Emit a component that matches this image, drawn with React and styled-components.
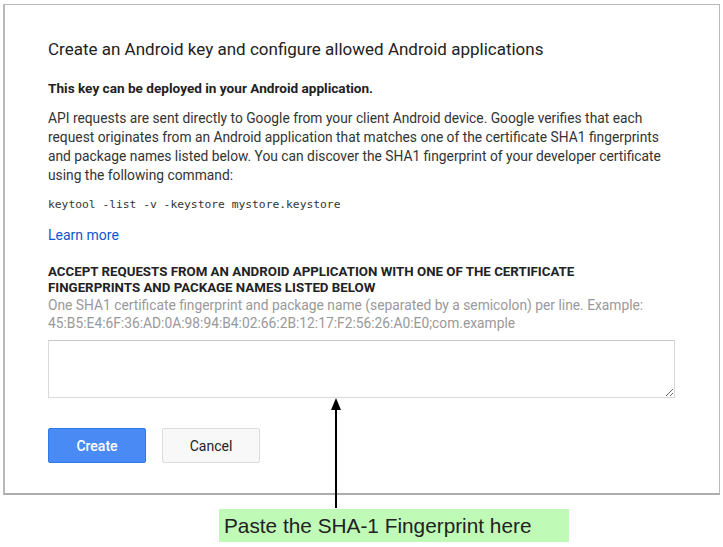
import React from "react";
import styled, { createGlobalStyle } from "styled-components";

const Global = createGlobalStyle`
  html, body { margin: 0; padding: 0; background: #fff; }
  body { font-family: Roboto, "Liberation Sans", Arial, sans-serif; }
`;

const Page = styled.div`
  position: relative;
  width: 723px;
  height: 547px;
  padding: 4px 0 0 3px;
  box-sizing: border-box;
`;

const Dialog = styled.div`
  width: 717px;
  height: 491px;
  box-sizing: border-box;
  border: 1px solid #b9b9b9;
  border-left-width: 2px;
  border-bottom: 2px solid #adadad;
  background: #fff;
  padding: 34px 40px 0 43px;
  display: flex;
  flex-direction: column;
`;

const Title = styled.h1`
  margin: 0;
  font-size: 17px;
  font-weight: 400;
  color: #222;
  line-height: 20px;
`;

const Lead = styled.p`
  margin: 21px 0 0;
  font-size: 13.6px;
  font-weight: 700;
  color: #222;
  line-height: 16px;
`;

const Body = styled.p`
  margin: 13px 0 0;
  font-size: 13.8px;
  color: #333;
  line-height: 19px;
  white-space: nowrap;
`;

const Code = styled.div`
  margin: 12px 0 0;
  font-family: "DejaVu Sans Mono", "Liberation Mono", monospace;
  font-size: 11.3px;
  color: #333;
  line-height: 16px;
`;

const Link = styled.a`
  margin: 14px 0 0;
  font-size: 14px;
  color: #15c;
  text-decoration: none;
  line-height: 16px;
  align-self: flex-start;
`;

const Label = styled.div`
  margin: 21px 0 0;
  font-size: 13.3px;
  font-weight: 700;
  color: #222;
  line-height: 16px;
  text-transform: uppercase;
  white-space: nowrap;
`;

const Hint = styled.div`
  margin: 0;
  font-size: 13.8px;
  color: #999;
  line-height: 18px;
  white-space: nowrap;
`;

const Area = styled.textarea`
  margin: 8px 0 0;
  width: 627px;
  height: 58px;
  box-sizing: border-box;
  border: 1px solid #d9d9d9;
  border-top-color: #c9c9c9;
  resize: vertical;
  font-family: inherit;
  outline: none;
`;

const Actions = styled.div`
  margin-top: 30px;
  display: flex;
  gap: 16px;
`;

const Button = styled.button`
  width: 98px;
  height: 35px;
  box-sizing: border-box;
  border-radius: 2px;
  font-family: Roboto, "Liberation Sans", sans-serif;
  font-size: 14px;
  font-weight: ${p => (p.$primary ? 500 : 400)};
  color: ${p => (p.$primary ? "#fff" : "#222")};
  background: ${p => (p.$primary ? "#4a8af4" : "#f8f8f8")};
  border: 1px solid ${p => (p.$primary ? "#3079ed" : "#dcdcdc")};
  cursor: pointer;
`;

const Arrow = styled.svg`
  position: absolute;
  left: 330px;
  top: 398px;
`;

const Callout = styled.div`
  position: absolute;
  left: 219px;
  top: 509px;
  width: 350px;
  height: 33px;
  background: #bffbb6;
  font-family: "Liberation Sans", Arial, sans-serif;
  font-size: 20.8px;
  color: #222;
  line-height: 33px;
  padding-left: 5px;
  box-sizing: border-box;
`;

export default function App() {
  return (
    <>
      <Global />
      <Page>
        <Dialog>
          <Title>Create an Android key and configure allowed Android applications</Title>
          <Lead>This key can be deployed in your Android application.</Lead>
          <Body>
            API requests are sent directly to Google from your client Android device. Google verifies that each
            <br />
            request originates from an Android application that matches one of the certificate SHA1 fingerprints
            <br />
            and package names listed below. You can discover the SHA1 fingerprint of your developer certificate
            <br />
            using the following command:
          </Body>
          <Code>keytool -list -v -keystore mystore.keystore</Code>
          <Link href="#">Learn more</Link>
          <Label>
            Accept requests from an Android application with one of the certificate
            <br />
            fingerprints and package names listed below
          </Label>
          <Hint>
            One SHA1 certificate fingerprint and package name (separated by a semicolon) per line. Example:
            <br />
            45:B5:E4:6F:36:AD:0A:98:94:B4:02:66:2B:12:17:F2:56:26:A0:E0;com.example
          </Hint>
          <Area />
          <Actions>
            <Button $primary>Create</Button>
            <Button>Cancel</Button>
          </Actions>
        </Dialog>
        <Arrow width="12" height="112" viewBox="0 0 12 112">
          <path d="M6 0 L11 12 L1 12 Z" fill="#000" />
          <line x1="6" y1="10" x2="6" y2="110" stroke="#000" strokeWidth="2" />
        </Arrow>
        <Callout>Paste the SHA-1 Fingerprint here</Callout>
      </Page>
    </>
  );
}
